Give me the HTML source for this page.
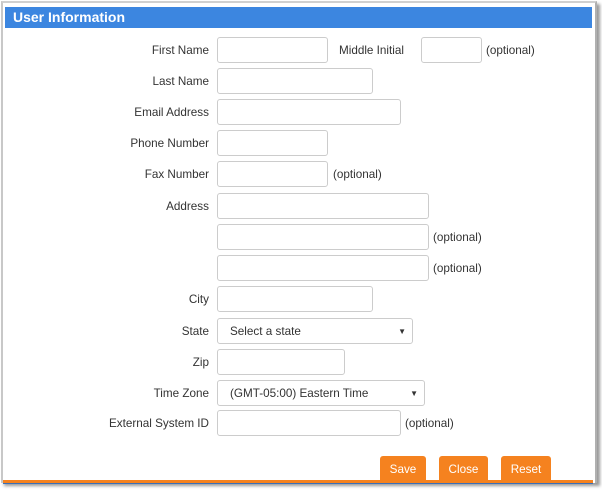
<!DOCTYPE html><html><head><style>
body{margin:0;width:602px;height:494px;background:#fff;position:relative;overflow:hidden;font-family:"Liberation Sans",Arial,sans-serif;font-size:11.7px;color:#333}
.a{position:absolute}
.frame{left:1px;top:1px;width:592px;height:480px;border-left:2px solid #c8c8c8;border-top:2px solid #d0d0d0;border-right:2px solid #b0b0b0;box-shadow:3px 3px 3px #999}
.hd{left:5px;top:7px;width:587px;height:21px;background:#3c86e0;color:#fff;font-weight:bold;font-size:14px;line-height:21px;padding-left:8px;box-sizing:border-box}
.l{text-align:right;width:200px;left:9px;line-height:27px}
.i{height:26px;border:1px solid #ccc;border-radius:3px;box-sizing:border-box;background:#fff}
.o{line-height:27px}
.s{padding-left:12px;line-height:25px;color:#333}
.s:after{content:"▼";position:absolute;right:6px;top:0;font-size:8px}
.b{background:#f5821f;color:#fff;border-radius:3px 3px 0 0;height:25px;top:456px;line-height:27px;text-align:center}
</style></head><body>
<div class="a frame"></div>
<div class="a hd">User Information</div>
<div class="a l" style="top:37px">First Name</div><div class="a i" style="left:217px;top:37px;width:111px"></div>
<div class="a o" style="left:339px;top:37px">Middle Initial</div><div class="a i" style="left:421px;top:37px;width:61px"></div><div class="a o" style="left:486px;top:37px">(optional)</div>
<div class="a l" style="top:68px">Last Name</div><div class="a i" style="left:217px;top:68px;width:156px"></div>
<div class="a l" style="top:99px">Email Address</div><div class="a i" style="left:217px;top:99px;width:184px"></div>
<div class="a l" style="top:130px">Phone Number</div><div class="a i" style="left:217px;top:130px;width:111px"></div>
<div class="a l" style="top:161px">Fax Number</div><div class="a i" style="left:217px;top:161px;width:111px"></div><div class="a o" style="left:333px;top:161px">(optional)</div>
<div class="a l" style="top:193px">Address</div><div class="a i" style="left:217px;top:193px;width:212px"></div>
<div class="a i" style="left:217px;top:224px;width:212px"></div><div class="a o" style="left:433px;top:224px">(optional)</div>
<div class="a i" style="left:217px;top:255px;width:212px"></div><div class="a o" style="left:433px;top:255px">(optional)</div>
<div class="a l" style="top:286px">City</div><div class="a i" style="left:217px;top:286px;width:156px"></div>
<div class="a l" style="top:318px">State</div><div class="a i s" style="left:217px;top:318px;width:196px">Select a state</div>
<div class="a l" style="top:349px">Zip</div><div class="a i" style="left:217px;top:349px;width:128px"></div>
<div class="a l" style="top:380px">Time Zone</div><div class="a i s" style="left:217px;top:380px;width:208px">(GMT-05:00) Eastern Time</div>
<div class="a l" style="top:410px">External System ID</div><div class="a i" style="left:217px;top:410px;width:184px"></div><div class="a o" style="left:405px;top:410px">(optional)</div>
<div class="a b" style="left:380px;width:46px">Save</div>
<div class="a b" style="left:439px;width:49px">Close</div>
<div class="a b" style="left:501px;width:50px">Reset</div>
<div class="a" style="left:3px;top:480px;width:590px;height:3px;background:#f5821f"></div>
<div class="a" style="left:3px;top:483px;width:590px;height:1px;background:#3a6fb8"></div>
</body></html>
